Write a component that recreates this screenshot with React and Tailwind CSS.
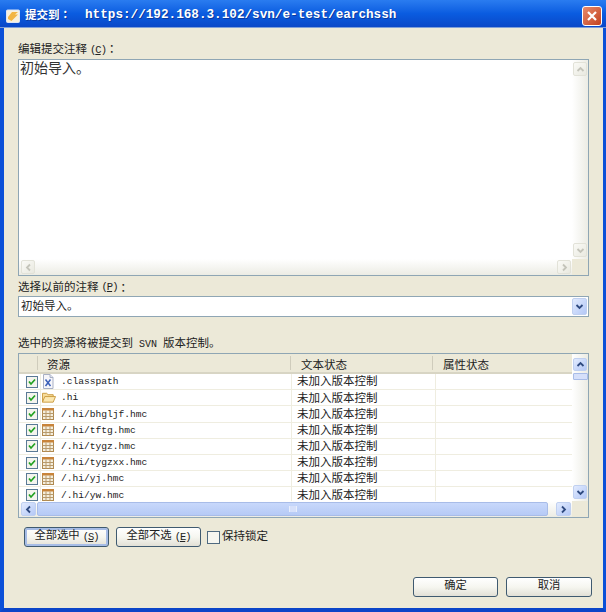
const cjk = "font-['Liberation_Mono','Noto_Sans_CJK_SC',monospace]"

const files = [
  { name: '.classpath', icon: 'xdoc' },
  { name: '.hi', icon: 'folder' },
  { name: '/.hi/bhgljf.hmc', icon: 'table' },
  { name: '/.hi/tftg.hmc', icon: 'table' },
  { name: '/.hi/tygz.hmc', icon: 'table' },
  { name: '/.hi/tygzxx.hmc', icon: 'table' },
  { name: '/.hi/yj.hmc', icon: 'table' },
  { name: '/.hi/yw.hmc', icon: 'table' },
]

function Chevron({ dir, color = '#4d6185', size = 9 }) {
  const d = {
    up: 'M1.5 6 L4.5 3 L7.5 6',
    down: 'M1.5 3 L4.5 6 L7.5 3',
    left: 'M6 1.5 L3 4.5 L6 7.5',
    right: 'M3 1.5 L6 4.5 L3 7.5',
  }[dir]
  return (
    <svg width={size} height={size} viewBox="0 0 9 9" fill="none">
      <path d={d} stroke={color} strokeWidth="1.8" />
    </svg>
  )
}

function DisabledBtn({ dir, className = '' }) {
  return (
    <div className={`flex items-center justify-center rounded-[2px] border border-[#e2e2d8] bg-gradient-to-br from-[#fafaf6] to-[#e9e9e0] ${className}`}>
      <Chevron dir={dir} color="#c4c4ba" />
    </div>
  )
}

function ActiveBtn({ dir, className = '' }) {
  return (
    <div className={`flex items-center justify-center rounded-[2px] border border-[#c0d0f0] bg-gradient-to-br from-[#e2ebfe] to-[#b4c8f6] ${className}`}>
      <Chevron dir={dir} color="#2f4a80" />
    </div>
  )
}

// mnemonic like (C) with the letter underlined, narrower than the cjk text
function Key({ letter }) {
  return (
    <span className="ml-[3px] text-[10.5px] tracking-[-1px]">
      (<span className="underline">{letter}</span>)
    </span>
  )
}

function Colon() {
  return <span className="font-['Noto_Sans_CJK_TC',sans-serif]">：</span>
}

function XDocIcon() {
  return (
    <svg width="12" height="15" viewBox="0 0 12 15">
      <path d="M1.5 .5 H8 L11 3.5 V14.5 H1.5 Z" fill="#f6f6fa" stroke="#a8b0c4" />
      <path d="M8 .5 V3.5 H11" fill="#e0e4ee" stroke="#a8b0c4" />
      <path d="M3.5 5.5 L8.5 12 M8.5 5.5 L3.5 12" stroke="#3a5fb8" strokeWidth="1.5" />
    </svg>
  )
}

function FolderIcon() {
  return (
    <svg width="15" height="13" viewBox="0 0 15 13">
      <path d="M.5 11.5 V2 H5 L6.5 3.5 H12 V5.5" fill="#f7dc9a" stroke="#c99a3e" />
      <path d="M.5 11.5 L3 5.5 H14.5 L12 11.5 Z" fill="#fbe7b0" stroke="#c99a3e" />
    </svg>
  )
}

function TableIcon() {
  return (
    <svg width="12" height="12" viewBox="0 0 12 12">
      <rect x=".5" y=".5" width="11" height="11" fill="#f4eedd" stroke="#b08a50" />
      <rect x="0" y="0" width="12" height="2.5" fill="#c8843a" />
      <path d="M4 2.5 V11.5 M8 2.5 V11.5 M.5 5.5 H11.5 M.5 8.5 H11.5" stroke="#b89a6c" strokeWidth="1" />
    </svg>
  )
}

function FileIcon({ type }) {
  if (type === 'xdoc') return <XDocIcon />
  if (type === 'folder') return <FolderIcon />
  return <TableIcon />
}

function Check() {
  return (
    <div className="flex h-[12px] w-[12px] shrink-0 items-center justify-center border border-[#5a7a96] bg-[#f4f4ee]">
      <svg width="8" height="8" viewBox="0 0 8 8" fill="none">
        <path d="M1 3.5 L3 6 L7 1.5" stroke="#21a121" strokeWidth="1.7" />
      </svg>
    </div>
  )
}

function XpButton({ children, className = '' }) {
  return (
    <button className={`flex h-[20px] items-center justify-center rounded-[3px] border border-[#3f5a70] bg-gradient-to-b from-white via-[#f6f6f0] to-[#e2e0d6] text-[11.3px] leading-none text-[#222] ${className}`}>
      {children}
    </button>
  )
}

export default function App() {
  return (
    <div className={`flex h-[612px] w-[606px] flex-col overflow-hidden bg-[#ece9d8] ${cjk}`}>
      {/* Title bar */}
      <div className="flex h-[28px] shrink-0 items-center border-b border-[#7f9fd8] bg-gradient-to-b from-[#2a7cf0] via-[#0a5ce0] to-[#0a48c8] pl-[6px] pr-[4px] pt-[4px]">
        <svg width="14" height="14" viewBox="0 0 14 14" className="shrink-0">
          <rect x=".5" y="1" width="13" height="12.5" rx="1" fill="#f8f0dc" stroke="#dbe4f6" />
          <path d="M2 8 L6 3 L12 3 L9 5.5 L12 5.5 L5.5 12 L2 10 Z" fill="#f2b544" />
        </svg>
        <span className="ml-[5px] w-[60px] shrink-0 text-[11.5px] font-bold leading-none text-white [text-shadow:1px_1px_0_#0a3aa0]">
          提交到<Colon />
        </span>
        <span className="whitespace-pre text-[12.67px] font-bold leading-none text-white [text-shadow:1px_1px_0_#0a3aa0]">https://192.168.3.102/svn/e-test/earchssh</span>
        <div className="ml-auto flex h-[20px] w-[20px] items-center justify-center rounded-[3px] border border-white bg-gradient-to-br from-[#e88a6a] to-[#c2401c]">
          <svg width="12" height="12" viewBox="0 0 12 12">
            <path d="M2 2 L10 10 M10 2 L2 10" stroke="white" strokeWidth="2.2" />
          </svg>
        </div>
      </div>

      {/* Body */}
      <div className="flex min-h-0 flex-1 flex-col border-b-[4px] border-l-[4px] border-r-[3px] border-b-[#0b45c8] border-l-[#0b50d8] border-r-[#0b50d8] pl-[14px] pr-[14px] text-[11.5px] text-[#222]">
        <div className="mt-[13px] h-[18px] leading-[14px]">编辑提交注释<Key letter="C" /><Colon /></div>

        {/* Comment box */}
        <div className="grid h-[217px] grid-cols-[1fr_16px] grid-rows-[1fr_16px] border border-[#8fa6b4] bg-white">
          <div className="px-[1px] pt-[1px] text-[14px] leading-[16px] text-[#333]">初始导入。</div>
          <div className="flex flex-col justify-between bg-gradient-to-r from-white to-[#ecece4] py-[2px] pl-[1px]">
            <DisabledBtn dir="up" className="h-[14px] w-[14px]" />
            <DisabledBtn dir="down" className="h-[14px] w-[14px]" />
          </div>
          <div className="flex items-center justify-between bg-gradient-to-b from-white to-[#ecece4] pl-[2px] pr-[1px]">
            <DisabledBtn dir="left" className="h-[14px] w-[14px]" />
            <DisabledBtn dir="right" className="h-[14px] w-[14px]" />
          </div>
          <div className="bg-[#ece9d8]" />
        </div>

        <div className="flex h-[20px] items-center pt-[3px]">选择以前的注释<Key letter="P" /><Colon /></div>

        {/* History combo */}
        <div className="flex h-[21px] items-center justify-between border border-[#8fa6b4] bg-white pl-[2px] pr-[1px] text-[#222]">
          <span className="text-[11.5px] leading-none">初始导入。</span>
          <ActiveBtn dir="down" className="h-[17px] w-[15px]" />
        </div>

        <div className="mt-[20px] h-[16px] leading-[14px]">
          选中的资源将被提交到<span className="text-[10px]"> SVN </span>版本控制。
        </div>

        {/* Resource table */}
        <div className="grid h-[165px] grid-cols-[1fr_16px] grid-rows-[1fr_16px] border border-[#8fa6b4] bg-white">
          <div className="min-h-0 overflow-hidden">
            <div className="grid h-[20px] grid-cols-[19px_253px_142px_1fr] items-center border-b-2 border-[#d8d5c4] bg-[#ece9d8] leading-[20px]">
              <div className="h-[14px] border-r border-[#cfccbc]" />
              <div className="h-[14px] border-r border-[#cfccbc] pl-[9px]">资源</div>
              <div className="h-[14px] border-r border-[#cfccbc] pl-[10px]">文本状态</div>
              <div className="h-[14px] pl-[10px]">属性状态</div>
            </div>
            {files.map((file) => (
              <div key={file.name} className="grid h-[16.2px] grid-cols-[273px_144px_1fr] border-b border-[#efede0]">
                <div className="flex items-center border-r border-[#efede0] pl-[7px]">
                  <Check />
                  <div className="ml-[2px] h-full w-[1px] shrink-0 bg-[#efede0]" />
                  <div className="flex w-[15px] shrink-0 items-center justify-start pl-[1px]">
                    <FileIcon type={file.icon} />
                  </div>
                  <span className="ml-[5px] pt-[1px] text-[9.6px] leading-none">{file.name}</span>
                </div>
                <div className="flex items-center border-r border-[#efede0] pl-[5px] pt-[1px] text-[11.5px] leading-none">未加入版本控制</div>
                <div />
              </div>
            ))}
          </div>
          <div className="flex flex-col bg-gradient-to-r from-white to-[#ecece4] pb-[2px] pl-[1px] pt-[4px]">
            <ActiveBtn dir="up" className="h-[13px] w-[14px]" />
            <div className="mt-[2px] h-[7px] w-[15px] rounded-[1px] border border-[#a8bce8] bg-[#d6e0fa]" />
            <ActiveBtn dir="down" className="mt-auto h-[14px] w-[14px]" />
          </div>
          <div className="flex items-center bg-gradient-to-b from-white to-[#ecece4] pl-[2px] pr-[1px]">
            <ActiveBtn dir="left" className="h-[14px] w-[15px]" />
            <div className="ml-[1px] flex h-[14px] flex-1 items-center justify-center rounded-[2px] border border-[#a8bce8] bg-gradient-to-b from-[#c8d8fb] to-[#b6caf6]">
              <div className="h-[6px] w-[8px] border-x border-[#e8eefc] bg-[#d6e0fa]" />
            </div>
            <ActiveBtn dir="right" className="ml-[8px] h-[14px] w-[15px]" />
          </div>
          <div className="bg-[#ece9d8]" />
        </div>

        {/* Select buttons */}
        <div className="mt-[9px] flex items-center pl-[6px]">
          <XpButton className="w-[85px] border-[#3c5c8c] shadow-[inset_0_0_0_2px_#a6bce6]">全部选中<Key letter="S" /></XpButton>
          <XpButton className="ml-[7px] w-[85px]">全部不选<Key letter="E" /></XpButton>
          <div className="ml-[6px] h-[13px] w-[13px] border border-[#4f6a80] bg-[#f6f6f0]" />
          <span className="ml-[2px] leading-none">保持锁定</span>
        </div>

        {/* Dialog buttons */}
        <div className="mb-[11px] mr-[-3px] mt-auto flex justify-end gap-[8px]">
          <XpButton className="w-[85px]">确定</XpButton>
          <XpButton className="w-[86px]">取消</XpButton>
        </div>
      </div>
    </div>
  )
}
